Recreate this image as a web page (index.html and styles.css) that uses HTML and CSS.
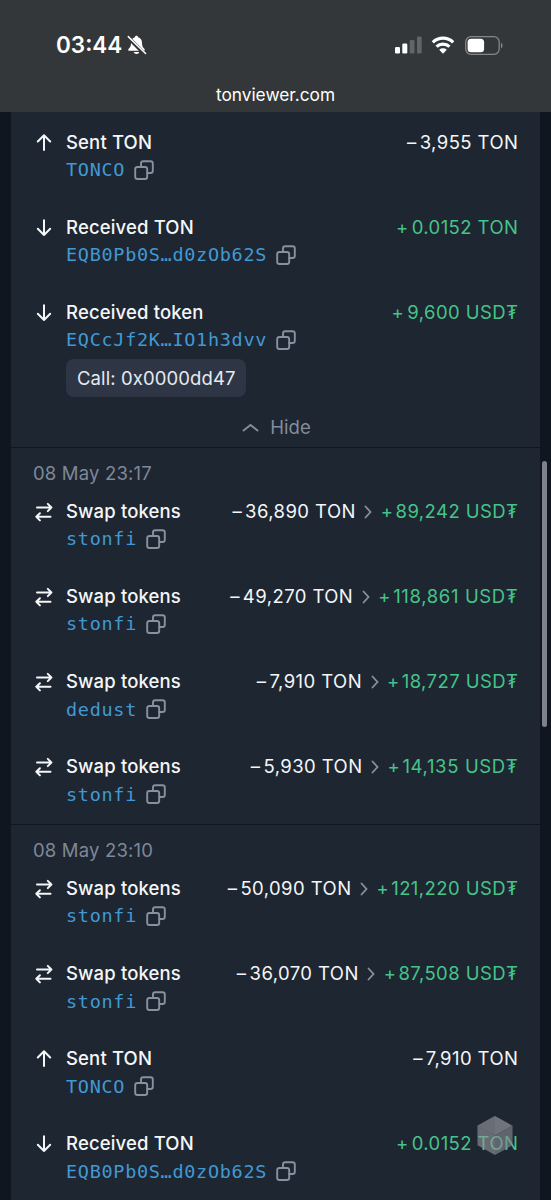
FILE: index.html
```html
<!DOCTYPE html>
<html lang="en">
<head>
<meta charset="utf-8">
<title>tonviewer.com</title>
<link rel="stylesheet" href="styles.css">
</head>
<body>
<svg class="defs" width="0" height="0">
  <symbol id="up" viewBox="0 0 18 18"><path d="M9 16V1.500M2.800 7.500 9 1.300l6.200 6.200"/></symbol>
  <symbol id="down" viewBox="0 0 18 18"><path d="M9 1.300V16M2.800 9.800 9 16l6.200-6.200"/></symbol>
  <symbol id="swap" viewBox="0 0 18 20"><path d="M2 5.500h14.400M12.800 1.900l3.600 3.600-3.600 3.600M15.500 14.800H1.300M4.900 11.200l-3.600 3.600 3.600 3.600"/></symbol>
  <symbol id="copy" viewBox="0 0 20 20"><rect x="1.200" y="7" width="12" height="12" rx="2.300"/><path d="M7 7V3.500a2.300 2.300 0 0 1 2.300-2.300h7.200a2.300 2.300 0 0 1 2.300 2.300v7.200a2.300 2.300 0 0 1-2.300 2.300h-3.300"/></symbol>
  <symbol id="next" viewBox="0 0 8 14"><path d="M1.500 1.500 6.500 7l-5 5.500"/></symbol>
</svg>
<header class="top">
  <div class="status">
    <span class="clock">03:44</span>
    <svg class="bell" viewBox="0 0 20 20"><path fill="#fff" d="M9.500.8c-.9 0-1.500.6-1.600 1.400C5.400 3 4 5 4 7.700c0 3.400-.8 4.500-2.300 6-.9 1-.5 2.100.8 2.100h14c1.300 0 1.700-1.100.8-2.100-1.500-1.500-2.300-2.600-2.300-6C15 5 13.600 3 11.100 2.200 11 1.400 10.400.8 9.500.8zM6.700 17h5.600c-.4 1.300-1.500 2-2.800 2s-2.400-.7-2.800-2z"/><path d="M.8 2.200 18 19.400" stroke="#34373a" stroke-width="3.800"/><path d="M1.300 1.600 18.600 18.500" stroke="#fff" stroke-width="1.500" stroke-linecap="round"/></svg>
    <span class="indicators">
      <svg class="signal" viewBox="0 0 27 18"><g fill="#fff"><rect x="0" y="11" width="5" height="6.500" rx="1.300"/><rect x="7.300" y="7.500" width="5" height="10" rx="1.300"/></g><g fill="#626468"><rect x="14.700" y="4" width="4.800" height="13.500" rx="1.300"/><rect x="22" y="0.500" width="4.700" height="17" rx="1.300"/></g></svg>
      <svg class="wifi" viewBox="0 0 24 18"><g fill="none" stroke="#fff" stroke-width="3.200"><path d="M1.800 6.300a14.800 14.800 0 0 1 20.400 0"/><path d="M5.500 10.700a9.500 9.500 0 0 1 13 0"/></g><path fill="#fff" d="M8.200 13.700a5.600 5.600 0 0 1 7.600 0L12 17.700z"/></svg>
      <svg class="battery" viewBox="0 0 39 19"><rect x=".7" y=".7" width="33.500" height="17.600" rx="5.300" fill="none" stroke="#84878a" stroke-width="1.300"/><rect x="2.600" y="2.700" width="16.500" height="13.600" rx="3.500" fill="#fff"/><path d="M36 6.700c2 .7 2 4.900 0 5.600z" fill="#84878a"/></svg>
    </span>
  </div>
  <div class="address">tonviewer.com</div>
</header>

<main class="feed">
  <section class="group first">
    <article class="op"><svg class="ic"><use href="#up"/></svg><div class="what"><h3>Sent TON</h3><div class="link"><a>TONCO</a><svg class="copy"><use href="#copy"/></svg></div></div><div class="sum"><b>–</b>3,955 TON</div></article>
    <article class="op"><svg class="ic"><use href="#down"/></svg><div class="what"><h3>Received TON</h3><div class="link"><a>EQB0Pb0S…d0zOb62S</a><svg class="copy"><use href="#copy"/></svg></div></div><div class="sum in"><b>+</b>0.0152 TON</div></article>
    <article class="op"><svg class="ic"><use href="#down"/></svg><div class="what"><h3>Received token</h3><div class="link"><a>EQCcJf2K…IO1h3dvv</a><svg class="copy"><use href="#copy"/></svg></div><div class="call">Call: 0x0000dd47</div></div><div class="sum in"><b>+</b>9,600 USD₮</div></article>
    <div class="hide"><svg viewBox="0 0 17 9"><path d="M1.500 7.500l7-5.500 7 5.500"/></svg>Hide</div>
  </section>

  <section class="group">
    <time>08 May 23:17</time>
    <article class="op"><svg class="ic sw"><use href="#swap"/></svg><div class="what"><h3>Swap tokens</h3><div class="link"><a>stonfi</a><svg class="copy"><use href="#copy"/></svg></div></div><div class="sum"><b>–</b>36,890 TON<svg class="next"><use href="#next"/></svg><span class="in"><b>+</b>89,242 USD₮</span></div></article>
    <article class="op"><svg class="ic sw"><use href="#swap"/></svg><div class="what"><h3>Swap tokens</h3><div class="link"><a>stonfi</a><svg class="copy"><use href="#copy"/></svg></div></div><div class="sum"><b>–</b>49,270 TON<svg class="next"><use href="#next"/></svg><span class="in loose"><b>+</b>118,861 USD₮</span></div></article>
    <article class="op"><svg class="ic sw"><use href="#swap"/></svg><div class="what"><h3>Swap tokens</h3><div class="link"><a>dedust</a><svg class="copy"><use href="#copy"/></svg></div></div><div class="sum"><b>–</b>7,910 TON<svg class="next"><use href="#next"/></svg><span class="in"><b>+</b>18,727 USD₮</span></div></article>
    <article class="op"><svg class="ic sw"><use href="#swap"/></svg><div class="what"><h3>Swap tokens</h3><div class="link"><a>stonfi</a><svg class="copy"><use href="#copy"/></svg></div></div><div class="sum"><b>–</b>5,930 TON<svg class="next"><use href="#next"/></svg><span class="in loose"><b>+</b>14,135 USD₮</span></div></article>
  </section>

  <section class="group">
    <time>08 May 23:10</time>
    <article class="op"><svg class="ic sw"><use href="#swap"/></svg><div class="what"><h3>Swap tokens</h3><div class="link"><a>stonfi</a><svg class="copy"><use href="#copy"/></svg></div></div><div class="sum"><b>–</b>50,090 TON<svg class="next"><use href="#next"/></svg><span class="in"><b>+</b>121,220 USD₮</span></div></article>
    <article class="op"><svg class="ic sw"><use href="#swap"/></svg><div class="what"><h3>Swap tokens</h3><div class="link"><a>stonfi</a><svg class="copy"><use href="#copy"/></svg></div></div><div class="sum"><b>–</b>36,070 TON<svg class="next"><use href="#next"/></svg><span class="in"><b>+</b>87,508 USD₮</span></div></article>
    <article class="op"><svg class="ic"><use href="#up"/></svg><div class="what"><h3>Sent TON</h3><div class="link"><a>TONCO</a><svg class="copy"><use href="#copy"/></svg></div></div><div class="sum"><b>–</b>7,910 TON</div></article>
    <article class="op"><svg class="ic"><use href="#down"/></svg><div class="what"><h3>Received TON</h3><div class="link"><a>EQB0Pb0S…d0zOb62S</a><svg class="copy"><use href="#copy"/></svg></div></div><div class="sum in"><b>+</b>0.0152 TON</div></article>
  </section>
</main>
<div class="scrollbar"></div>
<svg class="cube" viewBox="0 0 36 40"><path fill="#a2a3a9" d="M18 0 36 10 18 20 0 10z"/><path fill="#989aa1" d="M18 0v20L0 10z"/><path fill="#94969d" d="M0 10l18 10v20L0 30z"/><path fill="#888b93" d="M36 10 18 20v20l18-10z"/></svg>
</body>
</html>
```
FILE: styles.css
```css
* { box-sizing: border-box; }
body {
  margin: 0;
  height: 1200px;
  overflow: hidden;
  position: relative;
  background: #10161f;
  color: #f4f6f8;
  font: 400 18.5px/27.4px Inter, "Liberation Sans", sans-serif;
}
.defs { position: absolute; }
.top { height: 112px; background: #34373a; color: #fff; padding-top: 31px; }
.status { display: flex; align-items: center; height: 28px; padding: 0 48px 0 56px; }
.clock { font-size: 22.5px; font-weight: 600; letter-spacing: 0; width: 71px; }
.bell { width: 20px; height: 20px; }
.indicators { display: flex; align-items: center; margin-left: auto; gap: 10px; }
.signal { width: 27px; height: 18px; margin-right: -1px; }
.wifi { width: 24px; height: 18px; }
.battery { width: 39px; height: 19px; margin-right: -1px; }
.address { text-align: center; margin-top: 22px; font-size: 17.3px; }
.feed { margin: 0 11px; background: #1e2632; }
.group { border-top: 1px solid #10161f; padding: 12px 22px 15.950px; }
.group.first { border: 0; padding-top: 16.500px; height: 335px; }
time { display: block; color: #7f8896; margin-bottom: 10.500px; font-size: 18.500px; letter-spacing: .180px; }
.op { display: flex; align-items: flex-start; margin-bottom: 30.350px; }
.op:last-child { margin-bottom: 0; }
.ic { width: 18px; height: 18px; margin: 5px 14px 0 2px; fill: none; stroke: #f4f6f8; stroke-width: 2; stroke-linecap: round; stroke-linejoin: round; }
.ic.sw { height: 20px; margin: 4px 14px 0 2px; }
.what { margin-left: -1px; }
h3 { margin: 0; font-size: 18.500px; font-weight: 500; line-height: 27.400px; letter-spacing: .150px; }
.link { display: flex; align-items: center; height: 27.400px; color: #4199d4; font: 400 18.500px/27.400px "DejaVu Sans Mono", monospace; letter-spacing: .690px; }
.copy { width: 20px; height: 20px; margin-left: 9px; fill: none; stroke: #8891a0; stroke-width: 1.900; stroke-linecap: round; }
.sum { margin-left: auto; display: flex; align-items: center; white-space: nowrap; letter-spacing: .430px; margin-right: -.400px; }
.sum b { font-weight: 400; margin-right: 3px; }
.sum .in b { margin-right: 2px; }
.in { color: #45c489; }
.loose { letter-spacing: .640px; }
.next { width: 8px; height: 14px; margin: 0 8.500px; fill: none; stroke: #8891a0; stroke-width: 1.800; stroke-linecap: round; }
.call { width: 180px; height: 38px; margin-top: 5px; background: #2e3645; border-radius: 8px; padding-left: 11px; line-height: 38px; color: #e6eaf0; letter-spacing: .100px; }
.hide { display: flex; align-items: center; justify-content: center; gap: 11px; color: #848d9b; margin: -13px 0 0 2px; }
.hide svg { width: 17px; height: 9px; fill: none; stroke: #848d9b; stroke-width: 2; stroke-linecap: round; }
.scrollbar { position: absolute; left: 542px; top: 461px; width: 5px; height: 266px; border-radius: 3px; background: #7c818b; }
.cube { position: absolute; left: 477px; top: 1116px; width: 36px; height: 39px; opacity: .62; }
```
